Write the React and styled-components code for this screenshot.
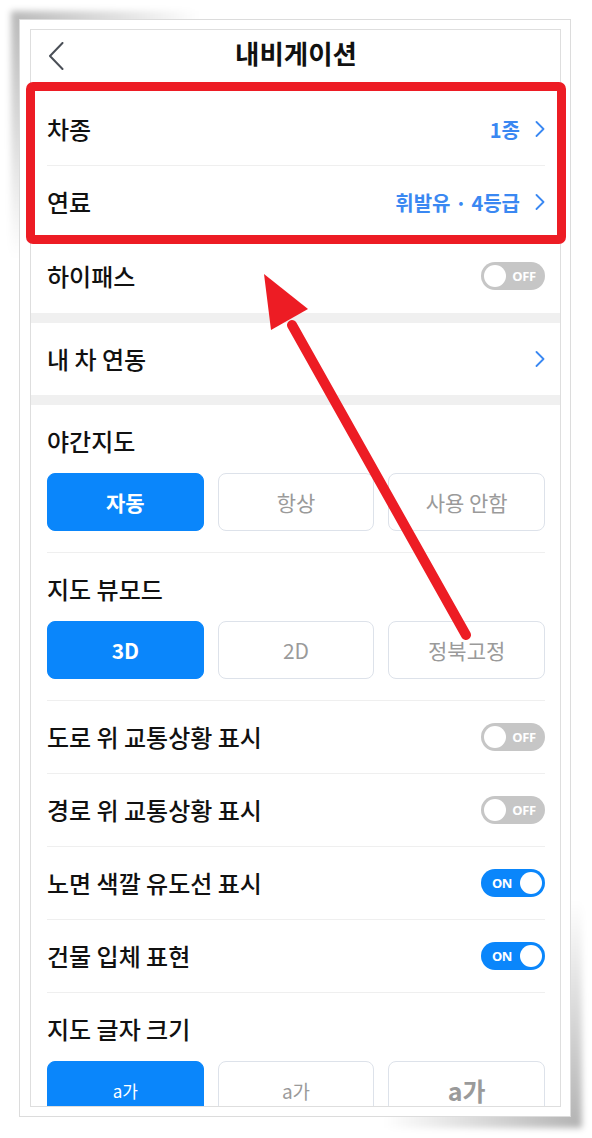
import React from 'react';
import styled, { createGlobalStyle } from 'styled-components';

const GlobalStyle = createGlobalStyle`
  html { background: #fff; }
  body { margin: 0; padding: 0; font-family: "Noto Sans CJK KR", "Noto Sans", sans-serif; color: #111; }
  * { box-sizing: border-box; }
`;

const BLUE = '#0a86fb';
const TEXT_BLUE = '#3a88f2';
const RED = '#ed1c24';

const Page = styled.div`
  padding: 19px;
  width: 592px;
`;

const Frame = styled.div`
  position: relative;
  width: 552px;
  height: 1098px;
  background: #fff;
  border: 1px solid #dcdcdc;
  padding: 9px 9px 9px 10px;

  &::before {
    content: '';
    position: absolute;
    top: -9px;
    left: -9px;
    width: 190px;
    height: 250px;
    background: radial-gradient(ellipse at 0 0, rgba(0, 0, 0, 0.28), rgba(0, 0, 0, 0) 70%);
    filter: blur(3px);
    z-index: -1;
  }

  &::after {
    content: '';
    position: absolute;
    right: -12px;
    bottom: -12px;
    width: 200px;
    height: 230px;
    background: radial-gradient(ellipse at 100% 100%, rgba(0, 0, 0, 0.3), rgba(0, 0, 0, 0) 70%);
    filter: blur(3px);
    z-index: -1;
  }
`;

const Screen = styled.div`
  height: 1078px;
  border: 1px solid #dedede;
  background: #fff;
  overflow: hidden;
  display: flex;
  flex-direction: column;
`;

const Header = styled.header`
  height: 63px;
  flex: none;
  display: grid;
  grid-template-columns: 1fr auto 1fr;
  align-items: start;
  padding: 0 16px 0 17px;
`;

const BackButton = styled.button`
  justify-self: start;
  margin-top: 12px;
  padding: 0;
  border: 0;
  background: none;
  display: flex;
`;

const Title = styled.h1`
  margin: 0;
  font-size: 26.5px;
  line-height: 46px;
  font-weight: 700;
  color: #111;
`;

const Group = styled.section`
  flex: none;
  padding: 0 15px 0 16px;
`;

const Band = styled.div`
  flex: none;
  height: 10px;
  background: #f0f0f0;
`;

const Row = styled.div`
  height: ${(p) => p.$h || 73}px;
  display: flex;
  align-items: center;
  justify-content: space-between;
  border-bottom: ${(p) => (p.$divider ? '1px solid #efefef' : '0')};
`;

const Label = styled.span`
  font-size: 24px;
  font-weight: 500;
  line-height: 30px;
  color: #111;
`;

const ValueLink = styled.span`
  display: flex;
  align-items: center;
  gap: 15px;
`;

const Value = styled.span`
  font-size: 20px;
  font-weight: 700;
  color: ${TEXT_BLUE};
`;

const Section = styled.div`
  padding: 21px 0 21px;
  border-bottom: ${(p) => (p.$divider ? '1px solid #efefef' : '0')};
  display: flex;
  flex-direction: column;
  gap: 17px;
`;

const Options = styled.div`
  display: grid;
  grid-template-columns: repeat(3, 1fr);
  gap: 14px;
`;

const Option = styled.button`
  height: 58px;
  border-radius: 8px;
  border: 1.5px solid ${(p) => (p.$active ? BLUE : '#dde2ea')};
  background: ${(p) => (p.$active ? BLUE : '#fff')};
  color: ${(p) => (p.$active ? '#fff' : '#9a9a9a')};
  font-family: "Noto Sans CJK KR", "Noto Sans", sans-serif;
  font-size: ${(p) => p.$size || 21}px;
  font-weight: ${(p) => (p.$bold ? 700 : 400)};
  display: flex;
  align-items: center;
  justify-content: center;
  padding: 0;
`;

const Toggle = styled.span`
  width: 64px;
  height: 28px;
  border-radius: 14px;
  background: ${(p) => (p.$on ? BLUE : '#c6c6c6')};
  display: flex;
  flex-direction: ${(p) => (p.$on ? 'row-reverse' : 'row')};
  align-items: center;
  padding: 0 3px;
  flex: none;
`;

const Knob = styled.span`
  width: 22px;
  height: 22px;
  border-radius: 50%;
  background: #fff;
  flex: none;
`;

const ToggleText = styled.span`
  flex: 1;
  text-align: center;
  color: #fff;
  font-family: "Noto Sans", "Liberation Sans", sans-serif;
  font-size: 13px;
  font-weight: 700;
  letter-spacing: -0.4px;
`;

const Highlight = styled.div`
  position: absolute;
  left: 6px;
  top: 62px;
  width: 540px;
  height: 162px;
  border: 9px solid ${RED};
  border-radius: 7px;
  pointer-events: none;
`;

const ArrowLayer = styled.svg`
  position: absolute;
  left: 0;
  top: 0;
  pointer-events: none;
`;

const Chevron = () => (
  <svg width="10" height="16" viewBox="0 0 10 16" fill="none">
    <path d="M1.5 1 L8.5 8 L1.5 15" stroke={TEXT_BLUE} strokeWidth="1.8" strokeLinecap="round" strokeLinejoin="round" />
  </svg>
);

const BackIcon = () => (
  <svg width="16" height="28" viewBox="0 0 16 28" fill="none">
    <path d="M14.5 1 L2 14 L14.5 27" stroke="#4a4f57" strokeWidth="2" strokeLinecap="round" strokeLinejoin="round" />
  </svg>
);

const Switch = ({ on }) => (
  <Toggle $on={on}>
    <Knob />
    <ToggleText>{on ? 'ON' : 'OFF'}</ToggleText>
  </Toggle>
);

const toggles = [
  { label: '도로 위 교통상황 표시', on: false },
  { label: '경로 위 교통상황 표시', on: false },
  { label: '노면 색깔 유도선 표시', on: true },
  { label: '건물 입체 표현', on: true },
];

export default function App() {
  return (
    <>
      <GlobalStyle />
      <Page>
        <Frame>
          <Screen>
            <Header>
              <BackButton aria-label="뒤로">
                <BackIcon />
              </BackButton>
              <Title>내비게이션</Title>
              <span />
            </Header>

            <Group>
              <Row $divider>
                <Label>차종</Label>
                <ValueLink>
                  <Value>1종</Value>
                  <Chevron />
                </ValueLink>
              </Row>
              <Row $divider>
                <Label>연료</Label>
                <ValueLink>
                  <Value>휘발유 · 4등급</Value>
                  <Chevron />
                </ValueLink>
              </Row>
              <Row $h={74}>
                <Label>하이패스</Label>
                <Switch on={false} />
              </Row>
            </Group>

            <Band />

            <Group>
              <Row $h={72}>
                <Label>내 차 연동</Label>
                <Chevron />
              </Row>
            </Group>

            <Band />

            <Group>
              <Section $divider>
                <Label>야간지도</Label>
                <Options>
                  <Option $active $bold>자동</Option>
                  <Option>항상</Option>
                  <Option>사용 안함</Option>
                </Options>
              </Section>
              <Section $divider>
                <Label>지도 뷰모드</Label>
                <Options>
                  <Option $active $bold>3D</Option>
                  <Option>2D</Option>
                  <Option>정북고정</Option>
                </Options>
              </Section>
              {toggles.map((t) => (
                <Row key={t.label} $divider>
                  <Label>{t.label}</Label>
                  <Switch on={t.on} />
                </Row>
              ))}
              <Section>
                <Label>지도 글자 크기</Label>
                <Options>
                  <Option $active $size={17}>a가</Option>
                  <Option $size={19}>a가</Option>
                  <Option $size={25} $bold>a가</Option>
                </Options>
              </Section>
            </Group>
          </Screen>

          <Highlight />
          <ArrowLayer width="550" height="1096" viewBox="0 0 550 1096">
            <line x1="446" y1="615" x2="272" y2="305" stroke={RED} strokeWidth="10" strokeLinecap="round" />
            <polygon points="244,254 288,289 251,310" fill={RED} />
          </ArrowLayer>
        </Frame>
      </Page>
    </>
  );
}
